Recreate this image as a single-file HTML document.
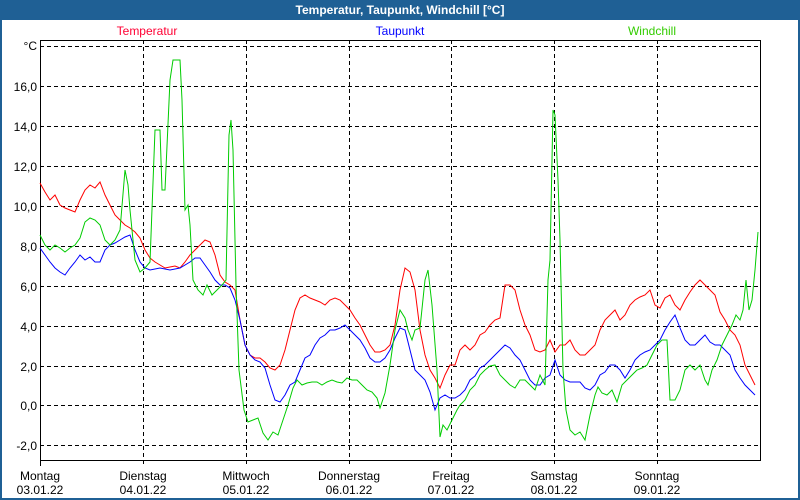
<!DOCTYPE html>
<html><head><meta charset="utf-8"><style>
html,body{margin:0;padding:0;width:800px;height:500px;overflow:hidden;background:#fff}
.t{font-family:"Liberation Sans",sans-serif;font-size:12px}
</style></head><body>
<svg width="800" height="500" xmlns="http://www.w3.org/2000/svg" class="t">
<rect x="0" y="0" width="800" height="500" fill="#1f6095"/>
<rect x="2" y="20" width="796" height="478" fill="#fff"/>
<text x="400" y="14" fill="#fff" font-weight="bold" text-anchor="middle">Temperatur, Taupunkt, Windchill [°C]</text>
<text x="147" y="35" fill="#ff0033" text-anchor="middle">Temperatur</text>
<text x="400" y="35" fill="#0000ff" text-anchor="middle">Taupunkt</text>
<text x="652" y="35" fill="#33cc00" text-anchor="middle">Windchill</text>
<g stroke="#000" stroke-width="1" stroke-dasharray="4,3" fill="none" shape-rendering="crispEdges">
<path d="M40 46.5H760M40 86.5H760M40 126.5H760M40 166.5H760M40 206.5H760M40 246.5H760M40 286.5H760M40 326.5H760M40 366.5H760M40 405.5H760M40 445.5H760"/>
<path d="M143.5 40V466M246.5 40V466M349.5 40V466M451.5 40V466M554.5 40V466M657.5 40V466"/>
</g>
<path d="M40.5 40V466M40 40.5H760.5V460.5H40" stroke="#000" fill="none" shape-rendering="crispEdges"/>
<g text-anchor="end" fill="#000">
<text x="37" y="50">°C</text>
<text x="37" y="91">16,0</text><text x="37" y="131">14,0</text><text x="37" y="171">12,0</text><text x="37" y="211">10,0</text><text x="37" y="251">8,0</text><text x="37" y="291">6,0</text><text x="37" y="331">4,0</text><text x="37" y="371">2,0</text><text x="37" y="410">0,0</text><text x="37" y="450">-2,0</text>
</g>
<g text-anchor="middle" fill="#000">
<text x="40" y="480">Montag</text><text x="40" y="494">03.01.22</text>
<text x="143" y="480">Dienstag</text><text x="143" y="494">04.01.22</text>
<text x="246" y="480">Mittwoch</text><text x="246" y="494">05.01.22</text>
<text x="349" y="480">Donnerstag</text><text x="349" y="494">06.01.22</text>
<text x="451" y="480">Freitag</text><text x="451" y="494">07.01.22</text>
<text x="554" y="480">Samstag</text><text x="554" y="494">08.01.22</text>
<text x="657" y="480">Sonntag</text><text x="657" y="494">09.01.22</text>
</g>
<polyline fill="none" stroke="#ff0000" points="40,183 45,192 50,200 55,195 60,205 65,208 70,210 75,212 80,200 85,190 90,185 95,188 100,182 105,195 110,205 115,215 120,220 125,225 130,228 135,232 140,238 145,250 150,258 155,262 160,265 165,268 170,267 175,266 180,268 185,262 190,255 195,250 200,245 205,240 210,242 215,255 220,275 225,282 230,285 235,290 240,320 245,345 250,355 255,358 260,358 265,362 270,368 275,370 280,365 285,350 290,330 295,310 300,298 305,295 310,298 315,300 320,302 325,305 330,300 335,298 340,300 345,305 350,310 355,318 360,325 365,335 370,345 375,352 380,352 385,350 390,345 395,325 400,290 405,268 410,272 415,290 420,330 425,355 430,370 435,378 440,388 445,375 450,365 455,365 460,350 465,345 470,350 475,345 480,335 485,332 490,325 495,320 500,318 505,285 510,285 515,290 520,310 525,325 530,335 535,350 540,352 545,350 550,340 555,352 560,345 565,345 570,340 575,350 580,355 585,355 590,350 595,345 600,330 605,320 610,315 615,310 620,320 625,315 630,305 635,300 640,297 645,295 650,290 655,305 660,308 665,298 670,295 675,305 680,310 685,300 690,292 695,285 700,280 705,285 710,290 715,295 720,312 725,320 730,330 735,335 740,345 745,365 750,375 755,385"/>
<polyline fill="none" stroke="#0000ff" points="40,248 45,255 50,262 55,268 60,272 65,275 70,268 75,262 80,255 85,260 90,257 95,262 100,262 105,250 110,245 115,243 120,240 125,237 130,235 135,250 140,262 145,268 150,270 160,268 170,270 180,268 190,262 195,258 200,258 205,265 210,272 215,280 220,285 225,285 230,288 235,300 240,320 245,345 250,355 255,360 260,362 265,368 270,385 275,400 280,402 285,395 290,385 295,382 300,370 305,358 310,355 315,345 320,338 325,335 330,330 335,330 340,328 345,325 350,330 355,335 360,340 365,348 370,358 375,362 380,362 385,358 390,350 395,338 400,328 405,330 410,350 415,370 420,375 425,380 430,392 435,410 440,398 445,395 450,398 455,398 460,395 465,390 470,380 475,376 480,368 485,365 490,360 495,355 500,350 505,345 510,348 515,355 520,360 525,370 530,380 535,385 540,385 545,378 550,375 555,360 560,375 565,380 570,382 575,382 580,382 585,388 590,390 595,385 600,375 605,372 610,365 615,365 620,370 625,378 630,370 635,360 640,355 645,352 650,350 655,345 660,340 665,330 670,322 675,315 680,328 685,340 690,345 695,345 700,340 705,335 710,342 715,345 720,345 725,350 730,355 735,370 740,378 745,385 750,390 755,395"/>
<polyline fill="none" stroke="#00cc00" points="40,235 45,245 50,250 55,245 60,248 65,252 70,248 75,245 80,238 85,222 90,218 95,220 100,225 105,240 110,245 115,240 120,230 125,170 128,185 130,210 135,260 140,272 145,268 150,262 155,130 160,130 162,190 165,190 170,80 173,60 180,60 182,100 185,210 188,205 190,225 193,280 198,290 203,295 207,285 212,295 217,290 222,285 226,280 229,135 231,120 233,150 236,285 239,370 244,410 248,422 253,420 258,418 263,433 268,440 273,432 278,435 283,420 288,405 293,388 297,380 302,385 307,383 312,382 317,382 322,385 327,382 332,380 337,382 342,383 347,378 352,380 357,380 362,385 367,390 372,392 377,398 380,408 385,393 390,365 395,330 400,310 405,318 408,330 412,340 415,330 420,328 425,280 428,270 432,305 437,370 440,437 443,425 447,430 452,420 457,410 460,405 465,400 470,390 475,385 480,375 485,370 490,366 495,365 500,375 505,380 510,385 515,388 520,380 525,380 530,385 535,390 540,375 545,385 548,280 550,260 553,110 555,115 558,180 560,240 563,370 566,410 570,430 575,435 580,432 585,440 590,415 595,395 598,387 602,393 607,395 612,390 617,402 622,385 627,380 632,375 637,370 642,368 647,365 652,355 657,345 662,340 667,340 670,400 675,400 680,390 685,370 690,365 695,370 700,365 705,380 708,385 712,370 717,360 722,345 727,335 732,325 736,315 740,320 743,310 746,280 749,310 752,300 755,270 758,232"/>
</svg>
</body></html>
